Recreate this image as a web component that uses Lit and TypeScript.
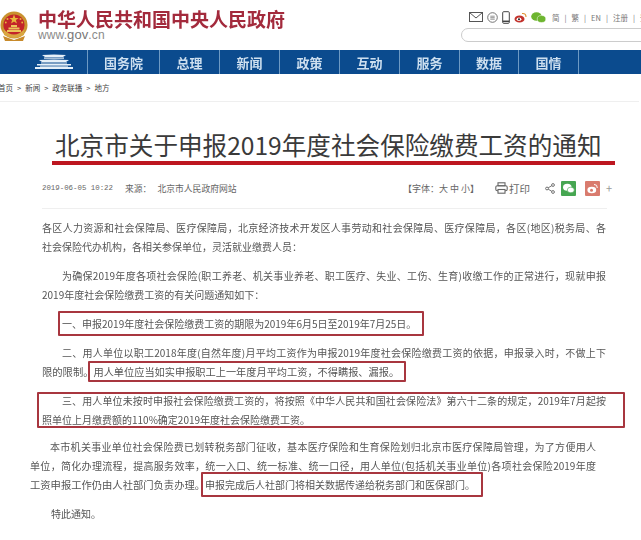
import { LitElement, html, css, svg } from "lit";
import { customElement } from "lit/decorators.js";

const emblem = svg`<svg class="emblem" viewBox="0 0 28 32" width="28" height="32">
  <path d="M3 26 L14 30 L25 26 L23 31 H5 Z" fill="#c88a2a"/>
  <circle cx="14" cy="15" r="13.5" fill="#c9922f"/>
  <circle cx="14" cy="15" r="10.6" fill="#c3242a"/>
  <path d="M14 4.5l1.3 3.6h3.4l-2.8 2 1 3.4-2.9-2-2.9 2 1-3.4-2.8-2h3.4z" fill="#e8b83c"/>
  <circle cx="7.5" cy="9" r="1" fill="#e8b83c"/><circle cx="20.5" cy="9" r="1" fill="#e8b83c"/>
  <circle cx="5.8" cy="12.5" r=".9" fill="#e8b83c"/><circle cx="22.2" cy="12.5" r=".9" fill="#e8b83c"/>
  <path d="M7 20h14v2H7zM8.500 17.500h11v2h-11zM11 15h6v2h-6z" fill="#ecc45a"/>
  <path d="M3.500 19 Q14 30 24.500 19 L24 25 Q14 31 4 25 Z" fill="#d9a640"/>
</svg>`;

const gate = svg`<svg viewBox="0 0 40 18" width="40" height="18" fill="#e6f0f8">
  <path d="M8 2 Q20 1 32 2 L29 4 H11 Z"/>
  <rect x="10" y="4.500" width="20" height="1.200"/>
  <path d="M5 7 Q20 5.800 35 7 L32 9 H8 Z"/>
  <rect x="7" y="9.500" width="26" height="1"/>
  <path d="M3 11h34v1.500H3zM1 14h38v2H1z"/>
  <rect x="6" y="12.500" width="28" height="1.500" opacity=".6"/>
</svg>`;

const mail = svg`<svg viewBox="0 0 14 10" width="14" height="10" fill="none" stroke="#555" stroke-width="1"><rect x=".5" y=".5" width="13" height="9"/><path d="M.5.5 7 6 13.500.5"/></svg>`;
const chat = svg`<svg viewBox="0 0 11 11" width="11" height="11" fill="none" stroke="#666" stroke-width=".9"><circle cx="5.500" cy="5.500" r="4.800"/><path d="M3.300 4.200h4.400M3.300 5.700h4.400M3.300 7.200h4.400" stroke-width=".7"/></svg>`;
const phone = svg`<svg viewBox="0 0 8 13" width="8" height="13" fill="none" stroke="#444" stroke-width="1"><rect x=".7" y=".7" width="6.600" height="11.600" rx="1"/><path d="M.7 10.300h6.600" stroke-width="1.500"/></svg>`;
const weibo = svg`<svg viewBox="0 0 13 11" width="13" height="11"><ellipse cx="5.500" cy="7" rx="5" ry="3.600" fill="#c2322c"/><ellipse cx="5" cy="7.200" rx="2.400" ry="1.700" fill="#fff"/><circle cx="5" cy="7.300" r="1" fill="#222"/><path d="M8 1.500 Q12 1 12 5" fill="none" stroke="#e0912f" stroke-width="1.100"/></svg>`;
const wechat = svg`<svg viewBox="0 0 15 11" width="15" height="11" fill="#6db52f"><ellipse cx="5.500" cy="4.500" rx="5.300" ry="4.300"/><ellipse cx="10.500" cy="7" rx="4.300" ry="3.500" stroke="#fff" stroke-width=".5"/></svg>`;
const printer = svg`<svg viewBox="0 0 13 12" width="13" height="12" fill="none" stroke="#666" stroke-width="1.100"><rect x="3" y=".8" width="7" height="3"/><rect x=".8" y="3.800" width="11.400" height="5" rx="1.500"/><rect x="3" y="7.500" width="7" height="3.700" fill="#fff"/></svg>`;
const share = svg`<svg viewBox="0 0 10 11" width="10" height="11" fill="none" stroke="#666" stroke-width=".9"><circle cx="2" cy="5.500" r="1.400"/><circle cx="8" cy="2" r="1.400"/><circle cx="8" cy="9" r="1.400"/><path d="M3.200 4.800 6.800 2.700M3.200 6.200 6.800 8.300"/></svg>`;
const wxWhite = svg`<svg viewBox="0 0 15 15" width="15" height="15"><rect width="15" height="15" rx="1" fill="#46a651"/><ellipse cx="6.300" cy="6.200" rx="4.300" ry="3.500" fill="#fff"/><ellipse cx="9.800" cy="9" rx="3.500" ry="2.800" fill="#fff" stroke="#46a651" stroke-width=".6"/></svg>`;
const wbWhite = svg`<svg viewBox="0 0 15 15" width="15" height="15"><rect width="15" height="15" rx="1" fill="#d97b6e"/><ellipse cx="6.800" cy="9" rx="4.400" ry="3.200" fill="#fff"/><circle cx="6.500" cy="9.200" r="1.500" fill="#d97b6e"/><path d="M9 3.500Q12.500 3.300 12.300 7" fill="none" stroke="#fff" stroke-width="1"/></svg>`;

const nav = [
  ["国务院", 72], ["总理", 60], ["新闻", 60], ["政策", 60], ["互动", 60],
  ["服务", 60], ["数据", 59], ["国情", 60],
] as const;

@customElement("app-root")
export class AppRoot extends LitElement {
  static styles = css`
    :host {
      display: block;
      width: 641px;
      height: 540px;
      overflow: hidden;
      background: #fff;
      font-family: "Noto Sans CJK SC", "Liberation Sans", sans-serif;
      color: #555;
    }
    .top {
      height: 50px;
      display: flex;
    }
    .brand {
      display: flex;
      gap: 10px;
      padding: 9px 0 0 0;
    }
    .emblem {
      display: block;
      margin-top: 1px;
    }
    .name {
      font-size: 19px;
      line-height: 20px;
      height: 20px;
      font-weight: 700;
      color: #a32a3c;
      white-space: nowrap;
      filter: blur(0.3px);
    }
    .url {
      font: 12px/12px "Liberation Sans", sans-serif;
      color: #8a8a8a;
      letter-spacing: 0.1px;
    }
    .url b {
      font-weight: 400;
      color: #777;
      font-size: 13px;
    }
    .tools {
      margin-left: auto;
      display: flex;
      flex-direction: column;
      width: 180px;
      padding-top: 9px;
      box-sizing: border-box;
      overflow: hidden;
    }
    .icons {
      display: flex;
      align-items: center;
      height: 16px;
      padding-left: 8px;
      gap: 4px;
      white-space: nowrap;
      font-size: 7.500px;
      color: #777;
    }
    .icons svg {
      display: block;
      flex: none;
    }
    .links {
      display: flex;
      gap: 5px;
      margin-left: 2px;
    }
    .search {
      margin-top: 3px;
      height: 14px;
      width: 200px;
      border: 1px solid #ccc;
      border-radius: 7px;
      box-sizing: border-box;
      flex: none;
    }
    nav {
      height: 24px;
      background: #0b4b8e;
      display: flex;
    }
    .gate {
      width: 88px;
      flex: none;
      display: flex;
      justify-content: flex-end;
      padding: 3px 13px 0 0;
      box-sizing: border-box;
      border-right: 1px solid #6d9ac4;
    }
    .item {
      flex: none;
      box-sizing: border-box;
      border-right: 1px solid #6d9ac4;
      display: flex;
      align-items: center;
      justify-content: center;
      font-size: 13px;
      font-weight: 700;
      color: #cddfef;
      filter: blur(0.3px);
    }
    .crumb {
      height: 28px;
      display: flex;
      align-items: center;
      gap: 4px;
      border-bottom: 1px solid #efefef;
      font-size: 7.500px;
      color: #444;
      box-sizing: border-box;
      transform: translateX(-2px);
    }
    article {
      padding: 0 0 0 42px;
      width: 564px;
    }
    h1 {
      margin: 28px 0 0 10px;
      width: 563px;
      font-size: 24.600px;
      line-height: 29px;
      height: 31px;
      font-weight: 400;
      color: #3a3a3a;
      white-space: nowrap;
      padding-left: 3px;
      box-sizing: border-box;
    }
    .rule {
      height: 4px;
      background: #bd1620;
      width: 563px;
      margin: 0 0 0 10px;
    }
    .meta {
      display: flex;
      align-items: center;
      height: 16px;
      margin-top: 15px;
      font-size: 8.800px;
      color: #666;
      white-space: nowrap;
      width: 570px;
    }
    .date {
      width: 83px;
      font-family: "Liberation Mono", monospace;
      font-size: 7.400px;
    }
    .source {
      display: flex;
      gap: 6px;
    }
    .meta-right {
      margin-left: auto;
      display: flex;
      align-items: center;
    }
    .font-size {
      font-size: 9px;
      width: 92px;
    }
    .print {
      display: flex;
      align-items: center;
      gap: 1px;
      font-size: 10.500px;
      width: 50px;
    }
    .meta-right svg {
      display: block;
    }
    .share {
      display: flex;
      align-items: center;
      gap: 6px;
      color: #999;
      font-size: 11px;
    }
    .share svg + svg + svg {
      margin-left: 3px;
    }
    hr {
      margin: 12px 0 0 0;
      border: 0;
      height: 1px;
      background: #efefef;
      width: 565px;
    }
    .body {
      margin-top: 9px;
      font-size: 10px;
      line-height: 19px;
      color: #555;
      filter: blur(0.25px);
    }
    .para {
      margin: 0 0 10px 0;
      width: 564px;
      position: relative;
    }
    .l {
      white-space: nowrap;
    }
    .full {
      white-space: normal;
      text-align: justify;
      text-align-last: justify;
    }
    .ind {
      text-indent: 20px;
    }
    .mark {
      border: 2px solid #a8363f;
      border-radius: 1px;
      padding: 3px 6px 3px 2px;
      margin-left: -4px;
    }
    .tight {
      font-size: 10.200px;
      padding: 1px 5px 1px 3px;
      margin-left: -5px;
    }
    .lead {
      font-size: 10.300px;
    }
    .boxed {
      margin-bottom: 8px;
    }
    .boxed::after {
      content: "";
      position: absolute;
      left: -5px;
      right: -19px;
      top: 1px;
      bottom: 1px;
      border: 2px solid #a8363f;
      border-radius: 1px;
    }
    .wide {
      margin-left: -12px;
      width: 566px;
    }
    .close {
      margin-left: 9px;
      width: auto;
    }
  `;

  render() {
    return html`
      <header class="top">
        <div class="brand">
          ${emblem}
          <div>
            <div class="name">中华人民共和国中央人民政府</div>
            <div class="url">www.<b>gov</b>.cn</div>
          </div>
        </div>
        <div class="tools">
          <div class="icons">
            ${mail}${chat}${phone}${weibo}${wechat}
            <span class="links"><span>简</span><span>|</span><span>繁</span><span>|</span><span>EN</span><span>|</span><span>注册</span><span>|</span><span>登录</span></span>
          </div>
          <div class="search"></div>
        </div>
      </header>
      <nav>
        <div class="gate">${gate}</div>
        ${nav.map(([t, w]) => html`<div class="item" style="width:${w}px">${t}</div>`)}
      </nav>
      <div class="crumb">
        <span>首页</span><span>&gt;</span><span>新闻</span><span>&gt;</span><span>政务联播</span><span>&gt;</span><span>地方</span>
      </div>
      <article>
        <h1>北京市关于申报2019年度社会保险缴费工资的通知</h1>
        <div class="rule"></div>
        <div class="meta">
          <span class="date">2019-06-05 10:22</span>
          <span class="source"><span>来源：</span><span>北京市人民政府网站</span></span>
          <div class="meta-right">
            <span class="font-size">【字体：大 中 小】</span>
            <span class="print">${printer}打印</span>
            <span class="share">${share}${wxWhite}${wbWhite}<span>+</span></span>
          </div>
        </div>
        <hr />
        <div class="body">
          <div class="para">
            <div class="l full">各区人力资源和社会保障局、医疗保障局，北京经济技术开发区人事劳动和社会保障局、医疗保障局，各区(地区)税务局、各</div>
            <div class="l">社会保险代办机构，各相关参保单位，灵活就业缴费人员：</div>
          </div>
          <div class="para">
            <div class="l full ind">为确保2019年度各项社会保险(职工养老、机关事业养老、职工医疗、失业、工伤、生育)收缴工作的正常进行，现就申报</div>
            <div class="l">2019年度社会保险缴费工资的有关问题通知如下：</div>
          </div>
          <div class="para">
            <div class="l ind"><span class="mark">一、申报2019年度社会保险缴费工资的期限为2019年6月5日至2019年7月25日。</span></div>
          </div>
          <div class="para">
            <div class="l full ind">二、用人单位以职工2018年度(自然年度)月平均工资作为申报2019年度社会保险缴费工资的依据，申报录入时，不做上下</div>
            <div class="l"><span class="lead">限的限制。</span><span class="mark tight">用人单位应当如实申报职工上一年度月平均工资，不得瞒报、漏报。</span></div>
          </div>
          <div class="para boxed">
            <div class="l full ind">三、用人单位未按时申报社会保险缴费工资的，将按照《中华人民共和国社会保险法》第六十二条的规定，2019年7月起按</div>
            <div class="l">照单位上月缴费额的110%确定2019年度社会保险缴费工资。</div>
          </div>
          <div class="para wide">
            <div class="l full ind">本市机关事业单位社会保险费已划转税务部门征收，基本医疗保险和生育保险划归北京市医疗保障局管理，为了方便用人</div>
            <div class="l full">单位，简化办理流程，提高服务效率，统一入口、统一标准、统一口径，用人单位(包括机关事业单位)各项社会保险2019年度</div>
            <div class="l"><span class="lead">工资申报工作仍由人社部门负责办理。</span><span class="mark">申报完成后人社部门将相关数据传递给税务部门和医保部门。</span></div>
          </div>
          <div class="para close">特此通知。</div>
        </div>
      </article>
    `;
  }
}
